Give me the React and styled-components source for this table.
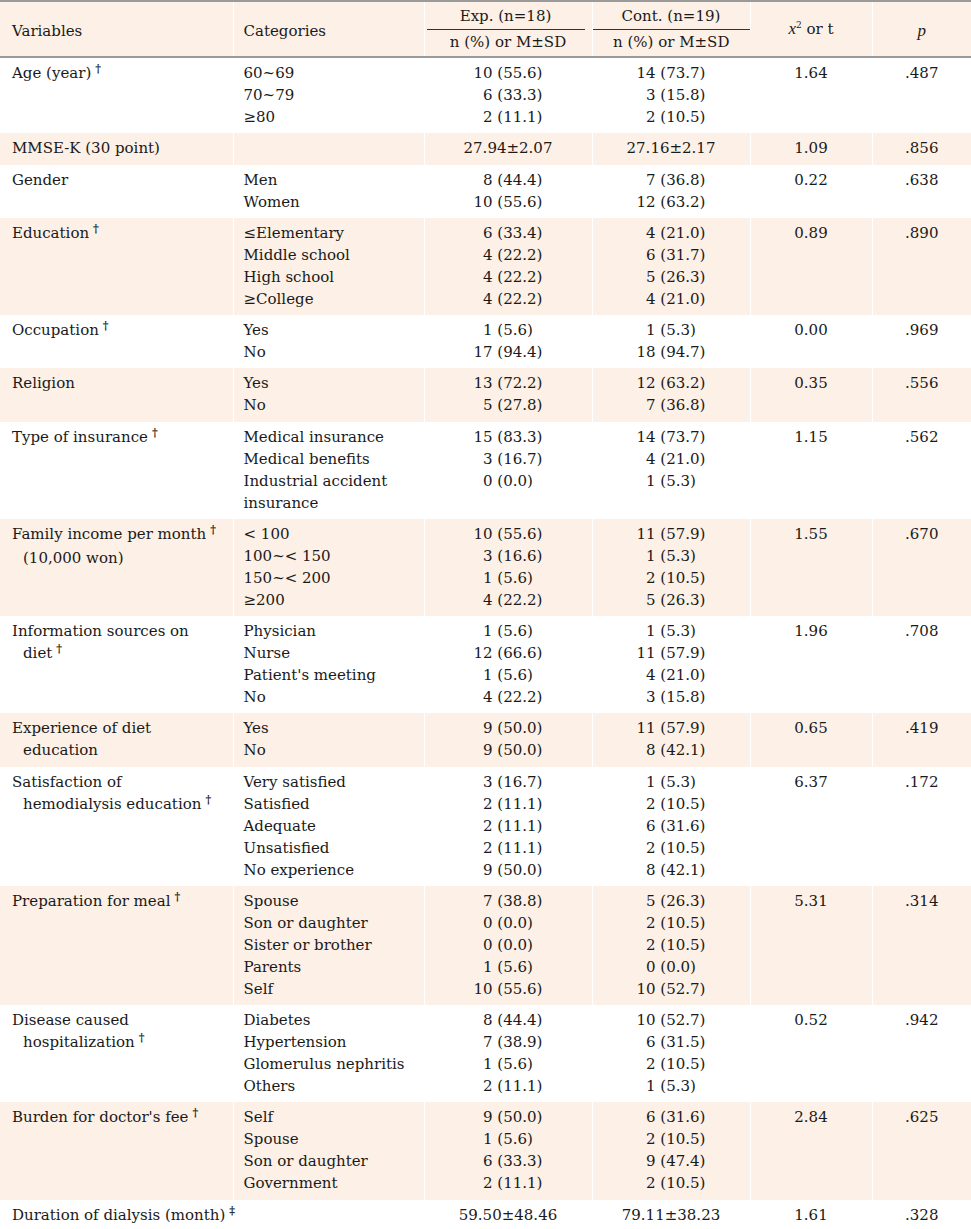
import React from "react";
import styled, { createGlobalStyle } from "styled-components";

const GlobalStyle = createGlobalStyle`
  body {
    margin: 0;
    background: #fff;
  }
`;

const SHADE = "#fdf0e6";

const rows = [
  { v: ["Age (year)"], mark: "†", cats: ["60~69", "70~79", "≥80"], exp: ["10 (55.6)", "6 (33.3)", "2 (11.1)"], cont: ["14 (73.7)", "3 (15.8)", "2 (10.5)"], t: "1.64", p: ".487" },
  { v: ["MMSE-K (30 point)"], cats: [], exp: ["27.94±2.07"], cont: ["27.16±2.17"], t: "1.09", p: ".856" },
  { v: ["Gender"], cats: ["Men", "Women"], exp: ["8 (44.4)", "10 (55.6)"], cont: ["7 (36.8)", "12 (63.2)"], t: "0.22", p: ".638" },
  { v: ["Education"], mark: "†", cats: ["≤Elementary", "Middle school", "High school", "≥College"], exp: ["6 (33.4)", "4 (22.2)", "4 (22.2)", "4 (22.2)"], cont: ["4 (21.0)", "6 (31.7)", "5 (26.3)", "4 (21.0)"], t: "0.89", p: ".890" },
  { v: ["Occupation"], mark: "†", cats: ["Yes", "No"], exp: ["1 (5.6)", "17 (94.4)"], cont: ["1 (5.3)", "18 (94.7)"], t: "0.00", p: ".969" },
  { v: ["Religion"], cats: ["Yes", "No"], exp: ["13 (72.2)", "5 (27.8)"], cont: ["12 (63.2)", "7 (36.8)"], t: "0.35", p: ".556" },
  { v: ["Type of insurance"], mark: "†", cats: ["Medical insurance", "Medical benefits", "Industrial accident", "insurance"], exp: ["15 (83.3)", "3 (16.7)", "0 (0.0)"], cont: ["14 (73.7)", "4 (21.0)", "1 (5.3)"], t: "1.15", p: ".562" },
  { v: ["Family income per month", "(10,000 won)"], mark: "†", markLine: 0, cats: ["< 100", "100~< 150", "150~< 200", "≥200"], exp: ["10 (55.6)", "3 (16.6)", "1 (5.6)", "4 (22.2)"], cont: ["11 (57.9)", "1 (5.3)", "2 (10.5)", "5 (26.3)"], t: "1.55", p: ".670" },
  { v: ["Information sources on", "diet"], mark: "†", cats: ["Physician", "Nurse", "Patient's meeting", "No"], exp: ["1 (5.6)", "12 (66.6)", "1 (5.6)", "4 (22.2)"], cont: ["1 (5.3)", "11 (57.9)", "4 (21.0)", "3 (15.8)"], t: "1.96", p: ".708" },
  { v: ["Experience of diet", "education"], cats: ["Yes", "No"], exp: ["9 (50.0)", "9 (50.0)"], cont: ["11 (57.9)", "8 (42.1)"], t: "0.65", p: ".419" },
  { v: ["Satisfaction of", "hemodialysis education"], mark: "†", cats: ["Very satisfied", "Satisfied", "Adequate", "Unsatisfied", "No experience"], exp: ["3 (16.7)", "2 (11.1)", "2 (11.1)", "2 (11.1)", "9 (50.0)"], cont: ["1 (5.3)", "2 (10.5)", "6 (31.6)", "2 (10.5)", "8 (42.1)"], t: "6.37", p: ".172" },
  { v: ["Preparation for meal"], mark: "†", cats: ["Spouse", "Son or daughter", "Sister or brother", "Parents", "Self"], exp: ["7 (38.8)", "0 (0.0)", "0 (0.0)", "1 (5.6)", "10 (55.6)"], cont: ["5 (26.3)", "2 (10.5)", "2 (10.5)", "0 (0.0)", "10 (52.7)"], t: "5.31", p: ".314" },
  { v: ["Disease caused", "hospitalization"], mark: "†", cats: ["Diabetes", "Hypertension", "Glomerulus nephritis", "Others"], exp: ["8 (44.4)", "7 (38.9)", "1 (5.6)", "2 (11.1)"], cont: ["10 (52.7)", "6 (31.5)", "2 (10.5)", "1 (5.3)"], t: "0.52", p: ".942" },
  { v: ["Burden for doctor's fee"], mark: "†", cats: ["Self", "Spouse", "Son or daughter", "Government"], exp: ["9 (50.0)", "1 (5.6)", "6 (33.3)", "2 (11.1)"], cont: ["6 (31.6)", "2 (10.5)", "9 (47.4)", "2 (10.5)"], t: "2.84", p: ".625" },
  { v: ["Duration of dialysis (month)"], mark: "‡", cats: [], exp: ["59.50±48.46"], cont: ["79.11±38.23"], t: "1.61", p: ".328" },
];

const Table = styled.table`
  width: 971px;
  table-layout: fixed;
  border-collapse: collapse;
  font-family: "DejaVu Serif", "Liberation Serif", serif;
  font-size: 15px;
  color: #1a1a1a;
  border-top: 2px solid #9a9a9a;
  border-bottom: 2px solid #555;
`;

const Head = styled.th`
  background: ${SHADE};
  font-weight: normal;
  text-align: ${(p) => p.$align || "center"};
  vertical-align: middle;
  padding: ${(p) => p.$pad || "6px 10px 0"};
  line-height: 20px;
  border-right: 1px solid #fff;
  border-bottom: ${(p) => (p.$bottom ? "2px solid #9a9a9a" : "none")};
  &:last-child {
    border-right: none;
  }
`;

const Rule = styled.div`
  border-bottom: 1px solid #333;
  margin: ${(p) => p.$margin};
  padding-bottom: 3px;
`;

const Cell = styled.td`
  background: ${(p) => (p.$shade ? SHADE : "#fff")};
  vertical-align: top;
  text-align: ${(p) => p.$align || "left"};
  padding: 4px 10px 5.27px;
  line-height: 22px;
  border-right: 1px solid #fff;
  &:first-child {
    padding-left: 12px;
  }
  &:last-child {
    border-right: none;
  }
`;

const VarLine = styled.div`
  padding-left: ${(p) => (p.$indent ? "11px" : "0")};
  white-space: nowrap;
`;

const Mark = styled.span`
  position: relative;
  top: -6px;
  margin-left: 4px;
  font-size: 11px;
  font-weight: bold;
`;

const Stack = styled.div`
  display: inline-block;
  text-align: left;
  white-space: nowrap;
`;

const Ghost = styled.span`
  visibility: hidden;
`;

const Italic = styled.i`
  font-family: "Liberation Serif", serif;
  font-size: 17px;
`;

const Sup = styled.sup`
  font-size: 9px;
`;

const Value = ({ text }) =>
  /^\d \(/.test(text) ? (
    <div>
      <Ghost>0</Ghost>
      {text}
    </div>
  ) : (
    <div>{text}</div>
  );

const Row = ({ row, shade }) => (
  <tr>
    <Cell $shade={shade}>
      {row.v.map((line, i) => (
        <VarLine key={i} $indent={i > 0}>
          {line}
          {row.mark && i === (row.markLine ?? row.v.length - 1) && <Mark>{row.mark}</Mark>}
        </VarLine>
      ))}
    </Cell>
    <Cell $shade={shade}>
      {row.cats.map((c, i) => (
        <div key={i}>{c}</div>
      ))}
    </Cell>
    <Cell $shade={shade} $align="center">
      <Stack>
        {row.exp.map((e, i) => (
          <Value key={i} text={e} />
        ))}
      </Stack>
    </Cell>
    <Cell $shade={shade} $align="center">
      <Stack>
        {row.cont.map((e, i) => (
          <Value key={i} text={e} />
        ))}
      </Stack>
    </Cell>
    <Cell $shade={shade} $align="center">{row.t}</Cell>
    <Cell $shade={shade} $align="center">{row.p}</Cell>
  </tr>
);

export default function App() {
  return (
    <>
      <GlobalStyle />
      <Table>
        <colgroup>
          <col style={{ width: 233 }} />
          <col style={{ width: 191 }} />
          <col style={{ width: 168 }} />
          <col style={{ width: 158 }} />
          <col style={{ width: 122 }} />
          <col style={{ width: 99 }} />
        </colgroup>
        <thead>
          <tr>
            <Head rowSpan={2} $align="left" $bottom $pad="4px 10px 0 12px">
              Variables
            </Head>
            <Head rowSpan={2} $align="left" $bottom $pad="4px 10px 0">
              Categories
            </Head>
            <Head $pad="4px 0 0">
              <Rule $margin="0 7px 0 2px">Exp. (n=18)</Rule>
            </Head>
            <Head $pad="4px 0 0">
              <Rule $margin="0 0 0 0">Cont. (n=19)</Rule>
            </Head>
            <Head rowSpan={2} $bottom $pad="0 10px 4px">
              <Italic>x</Italic>
              <Sup>2</Sup> or t
            </Head>
            <Head rowSpan={2} $bottom $pad="4px 10px 0">
              <Italic>p</Italic>
            </Head>
          </tr>
          <tr>
            <Head $bottom $pad="2px 0 4px">
              n (%) or M±SD
            </Head>
            <Head $bottom $pad="2px 0 4px">
              n (%) or M±SD
            </Head>
          </tr>
        </thead>
        <tbody>
          {rows.map((row, i) => (
            <Row key={i} row={row} shade={i % 2 === 1} />
          ))}
        </tbody>
      </Table>
    </>
  );
}
